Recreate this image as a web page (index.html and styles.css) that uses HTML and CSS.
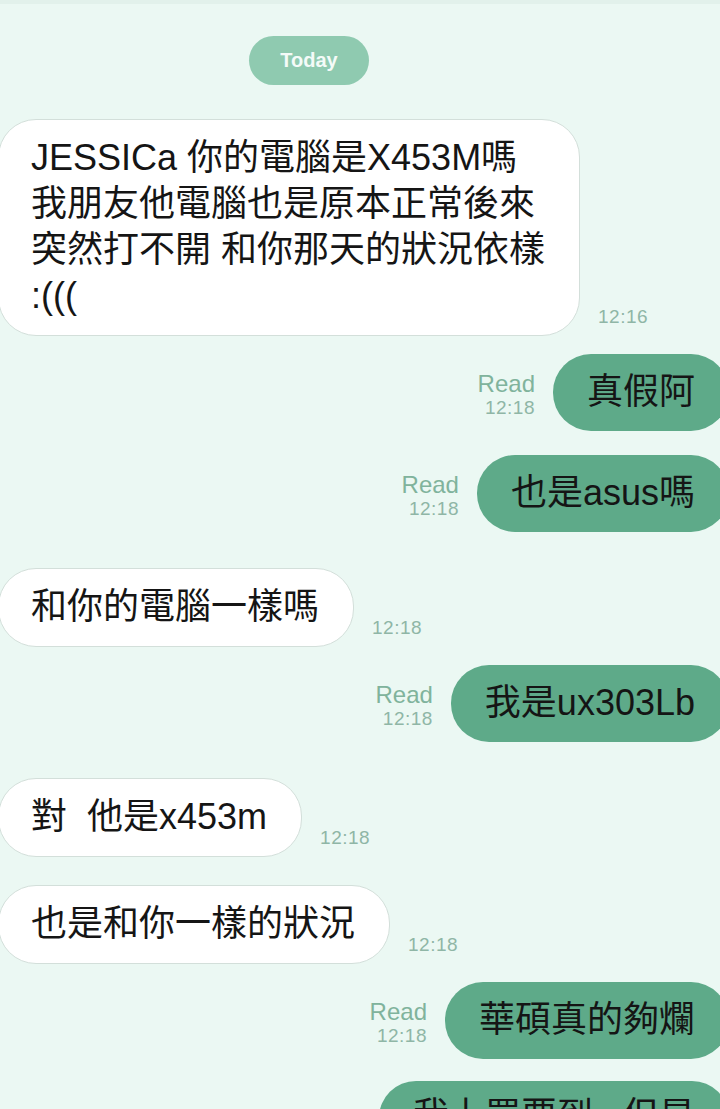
FILE: index.html
```html
<!DOCTYPE html>
<html lang="zh-Hant">
<head>
  <meta charset="UTF-8" />
  <meta name="viewport" content="width=device-width, initial-scale=1" />
  <title>Chat</title>
  <link rel="stylesheet" href="styles.css">
</head>
<body>
  <div class="chat">
    <div class="date"><span>Today</span></div>

    <div class="row in">
      <div class="bubble">JESSICa 你的電腦是X453M嗎<br />我朋友他電腦也是原本正常後來<br />突然打不開 和你那天的狀況依樣<br />:(((</div>
      <div class="time">12:16</div>
    </div>

    <div class="row out">
      <div class="meta"><span class="read">Read</span><span class="time">12:18</span></div>
      <div class="bubble">真假阿</div>
    </div>

    <div class="row out">
      <div class="meta"><span class="read">Read</span><span class="time">12:18</span></div>
      <div class="bubble">也是asus嗎</div>
    </div>

    <div class="row in">
      <div class="bubble">和你的電腦一樣嗎</div>
      <div class="time">12:18</div>
    </div>

    <div class="row out">
      <div class="meta"><span class="read">Read</span><span class="time">12:18</span></div>
      <div class="bubble">我是ux303Lb</div>
    </div>

    <div class="row in">
      <div class="bubble">對&nbsp; 他是x453m</div>
      <div class="time">12:18</div>
    </div>

    <div class="row in">
      <div class="bubble">也是和你一樣的狀況</div>
      <div class="time">12:18</div>
    </div>

    <div class="row out">
      <div class="meta"><span class="read">Read</span><span class="time">12:18</span></div>
      <div class="bubble">華碩真的夠爛</div>
    </div>

    <div class="row out">
      <div class="bubble">我上買要到&nbsp;&nbsp; 但是</div>
    </div>
  </div>
</body>
</html>
```

FILE: styles.css
```css
* {
  box-sizing: border-box;
}

body {
  margin: 0;
  height: 1109px;
  overflow: hidden;
  background: #ebf8f3;
  border-top: 4px solid #e2f1eb;
  font-family: "Liberation Sans", "Noto Sans CJK TC", sans-serif;
  color: #151515;
}

.chat {
  display: flex;
  flex-direction: column;
}

.date {
  display: flex;
  margin: 32px 0 34px 249px;
}

.date span {
  width: 120px;
  height: 49px;
  line-height: 49px;
  text-align: center;
  border-radius: 25px;
  background: #8fcab0;
  color: #f4fbf8;
  font-size: 20px;
  font-weight: bold;
}

.row {
  display: flex;
  align-items: flex-end;
  gap: 18px;
  margin-top: 24px;
}

.date + .row {
  margin-top: 0;
}

.out + .in {
  margin-top: 36px;
}

.in + .out {
  margin-top: 18px;
}

.in + .in {
  margin-top: 28px;
}

.out + .out:last-child {
  margin-top: 22px;
}

.bubble {
  font-size: 36px;
  line-height: 46px;
  padding: 15px 34px 16px;
  border-radius: 38px;
  white-space: nowrap;
}

.out .bubble:only-child {
  padding-top: 12px;
}

.in .bubble {
  margin-left: -2px;
  padding-left: 32px;
  background: #fff;
  border: 1.5px solid #d3dfda;
}

.out {
  justify-content: flex-end;
}

.out .bubble {
  margin-right: -9px;
  background: #5eaa89;
}

.meta {
  display: flex;
  flex-direction: column;
  align-items: flex-end;
  margin-bottom: 12px;
}

.read {
  font-size: 24px;
  line-height: 26px;
  color: #80b39c;
}

.time {
  font-size: 19px;
  line-height: 22px;
  letter-spacing: 0.5px;
  color: #8fb6a6;
}

.in .time {
  margin-bottom: 8px;
}
```
